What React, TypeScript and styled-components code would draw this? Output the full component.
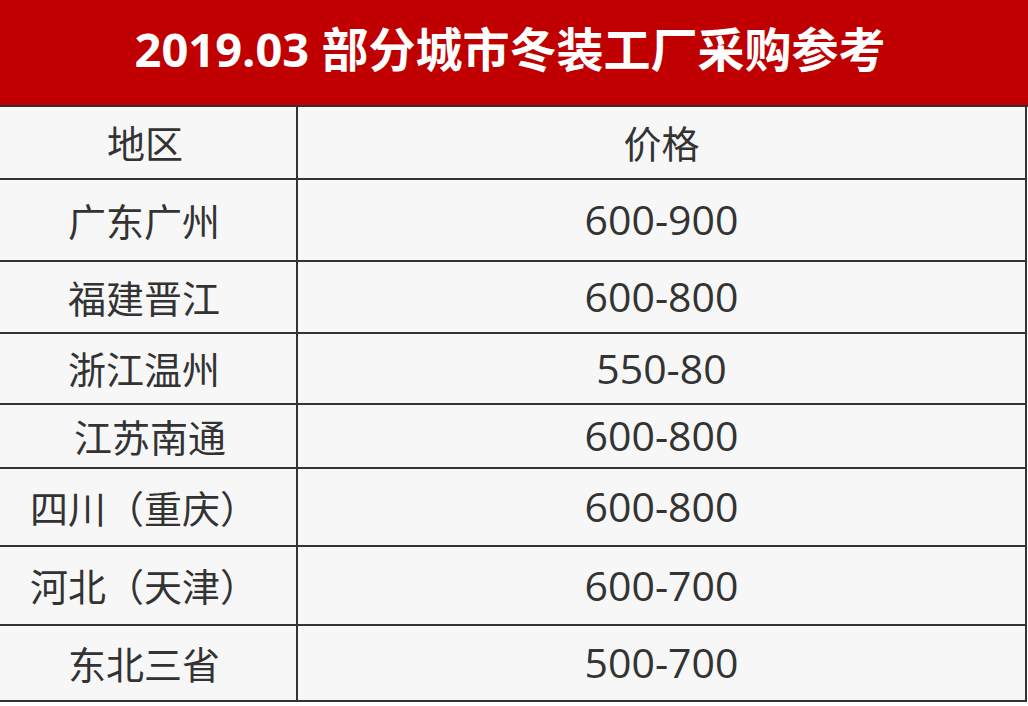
import React from "react";
import styled, { createGlobalStyle } from "styled-components";

const GlobalStyle = createGlobalStyle`
  html, body { margin: 0; padding: 0; background: #ffffff; }
  * { box-sizing: border-box; }
`;

const Page = styled.div`
  width: 1028px;
  height: 706px;
  background: #ffffff;
  overflow: hidden;
`;

const Title = styled.div`
  height: 107px;
  background: #c00000;
  border-bottom: 2px solid #3a2a2a;
  display: flex;
  align-items: center;
  justify-content: center;
  padding-bottom: 12px;
  padding-right: 8px;
  color: #ffffff;
  font-family: "Open Sans", "Noto Sans CJK SC", sans-serif;
  font-weight: 700;
  font-size: 47px;
`;

const Table = styled.div`
  display: grid;
  grid-template-columns: 298px 729px;
`;

const Cell = styled.div<{ $h: number }>`
  height: ${(p) => p.$h}px;
  background: #f7f7f7;
  border-bottom: 2px solid #333333;
  border-right: 2px solid #333333;
  display: flex;
  align-items: center;
  justify-content: center;
  color: #333333;
  padding-bottom: 2px;
`;

const RegionCell = styled(Cell)<{ $shift?: number }>`
  font-family: "Noto Sans CJK SC", sans-serif;
  font-size: 38px;
  padding-left: ${(p) => Math.max(0, p.$shift ?? 0)}px;
  padding-right: ${(p) => Math.max(0, -(p.$shift ?? 0))}px;
`;

const PriceCell = styled(Cell)`
  font-family: "Open Sans", "Noto Sans CJK SC", sans-serif;
  font-size: 41px;
`;

const rows: { region: string; price: string; h: number; shift?: number }[] = [
  { region: "广东广州", price: "600-900", h: 82, shift: -8 },
  { region: "福建晋江", price: "600-800", h: 72, shift: -8 },
  { region: "浙江温州", price: "550-80", h: 71, shift: -8 },
  { region: "江苏南通", price: "600-800", h: 64, shift: 4 },
  { region: "四川（重庆）", price: "600-800", h: 78, shift: -8 },
  { region: "河北（天津）", price: "600-700", h: 79, shift: -8 },
  { region: "东北三省", price: "500-700", h: 76, shift: -8 },
];

export default function App() {
  return (
    <Page>
      <GlobalStyle />
      <Title>2019.03 部分城市冬装工厂采购参考</Title>
      <Table>
        <RegionCell $h={73} $shift={-6}>
          地区
        </RegionCell>
        <RegionCell $h={73}>价格</RegionCell>
        {rows.map((r) => (
          <React.Fragment key={r.region}>
            <RegionCell $h={r.h} $shift={r.shift}>
              {r.region}
            </RegionCell>
            <PriceCell $h={r.h}>{r.price}</PriceCell>
          </React.Fragment>
        ))}
      </Table>
    </Page>
  );
}
